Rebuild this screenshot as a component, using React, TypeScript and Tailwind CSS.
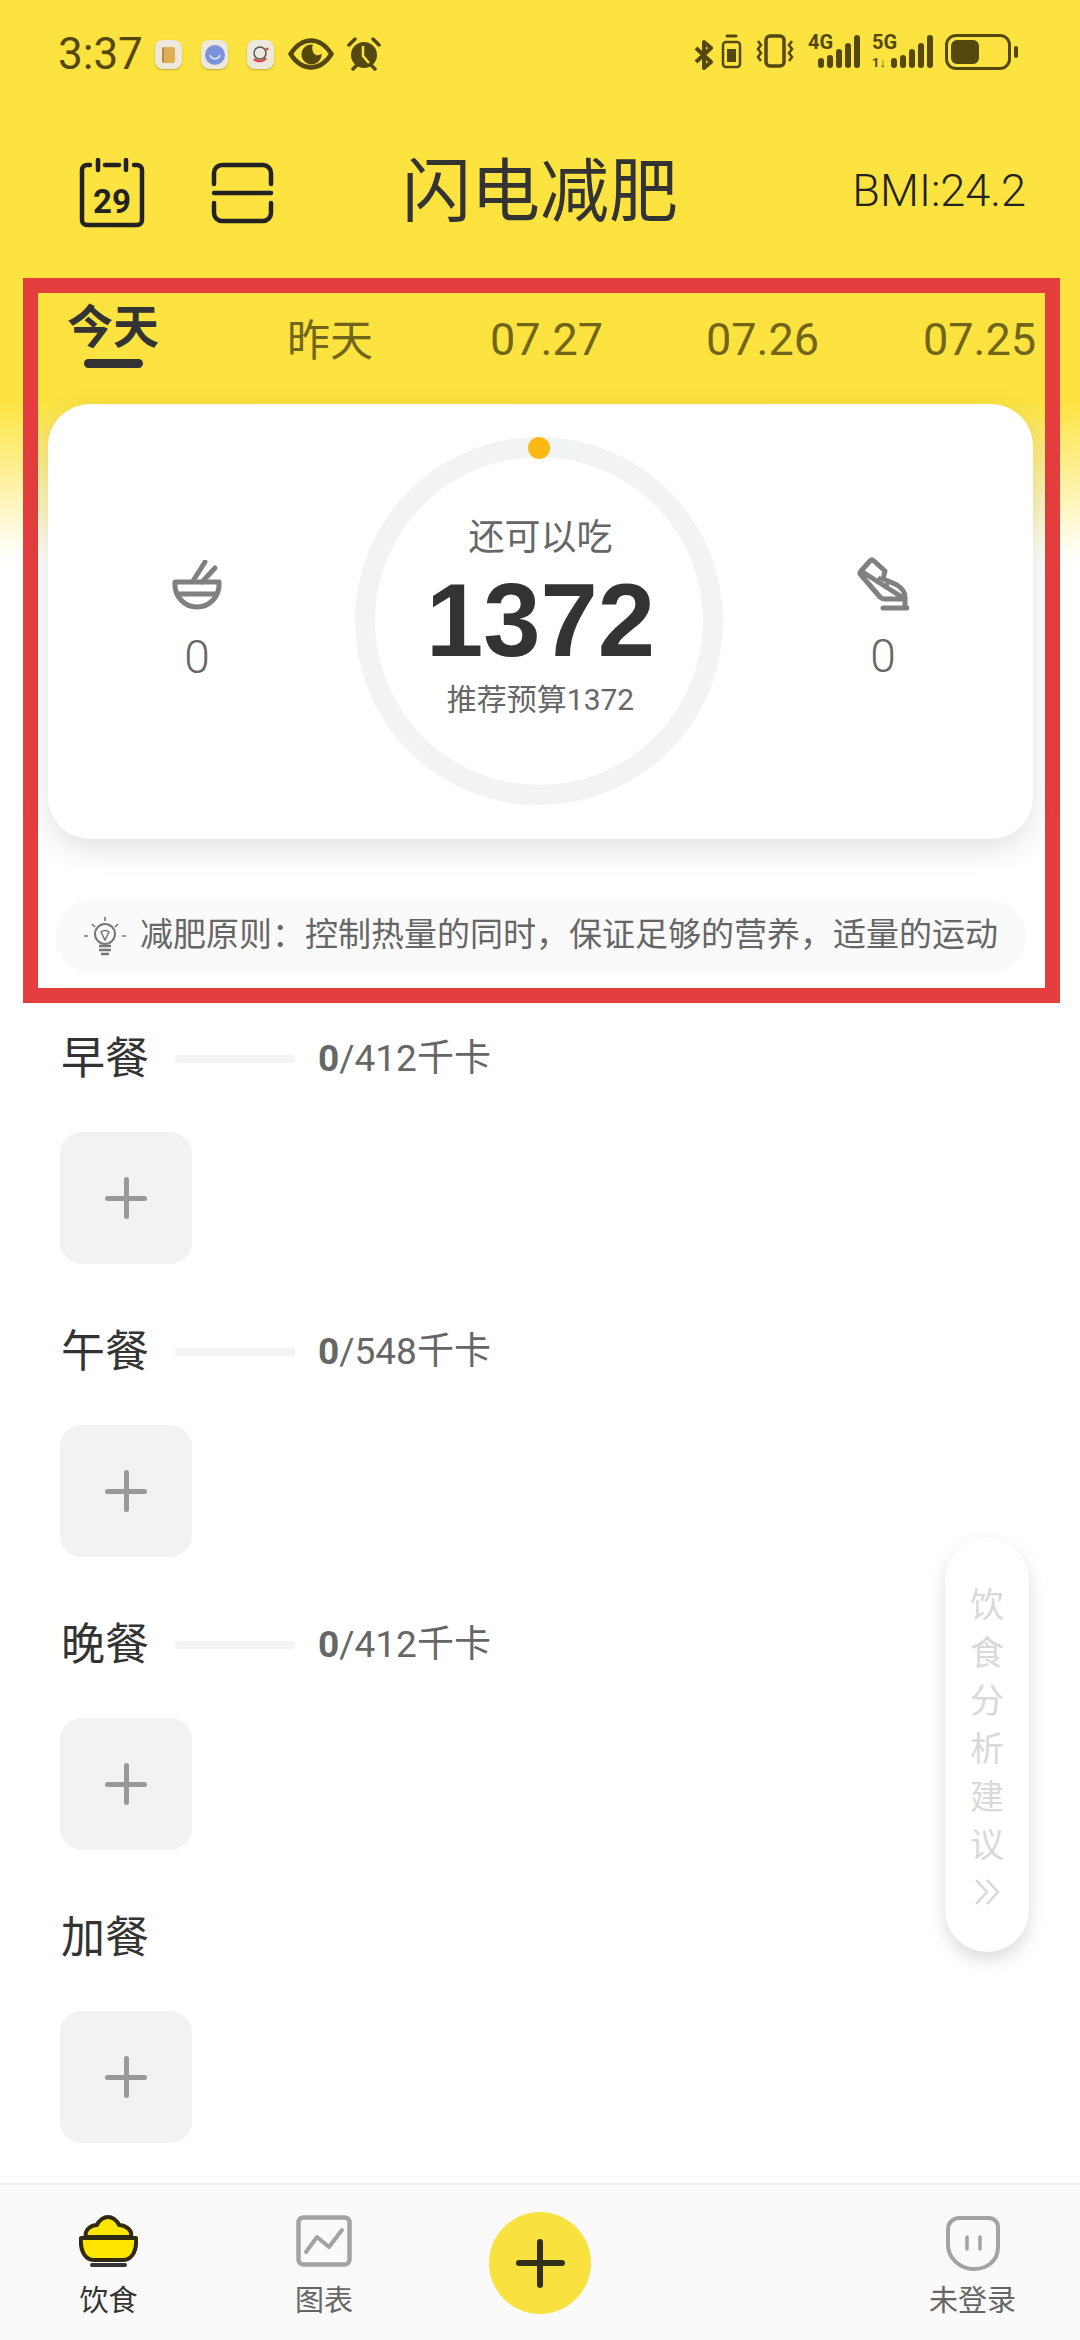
import React from 'react';

const CJK = '[font-family:Roboto,"Noto_Sans_CJK_SC",sans-serif]';
const DARK = '#54480f';

function AppDot({ children }: { children: React.ReactNode }) {
  return (
    <div className="w-[27px] h-[29px] rounded-[8px] bg-[#ece9dc] shadow-[0_1px_2px_rgba(0,0,0,0.25)] flex items-center justify-center">
      {children}
    </div>
  );
}

function SignalBars({ heights }: { heights: number[] }) {
  return (
    <div className="absolute right-0 bottom-0 flex items-end gap-[3px]">
      {heights.map((h, i) => (
        <div key={i} className="w-[6px] rounded-full bg-[#54480f]" style={{ height: h }} />
      ))}
    </div>
  );
}

function StatusBar() {
  return (
    <div className="h-[108px] shrink-0 pt-[34px] pl-[58px] pr-[62px] flex items-start text-[#54480f]">
      <span className="text-[44px] leading-[40px] w-[97px] [font-family:Roboto,sans-serif]">3:37</span>
      <div className="flex gap-[19px] pt-[6px]">
        <AppDot><div className="w-[13px] h-[16px] rounded-[2px] bg-[#dcae55] border-l-2 border-[#b98c3a]" /></AppDot>
        <AppDot>
          <svg width="20" height="20" viewBox="0 0 20 20">
            <circle cx="10" cy="10" r="10" fill="#7b93dc" />
            <path d="M5 10c2 5 8 5 10 0" stroke="#e8edf9" strokeWidth="1.600" fill="none" />
          </svg>
        </AppDot>
        <AppDot>
          <svg width="20" height="20" viewBox="0 0 20 20" fill="none">
            <circle cx="9" cy="8" r="6" stroke="#555" strokeWidth="1.500" />
            <path d="M3 14c3 3 9 3 12-1" stroke="#d84a4a" strokeWidth="2.500" />
            <circle cx="16" cy="4" r="1.500" fill="#d84a4a" />
          </svg>
        </AppDot>
      </div>
      <svg className="ml-[14px] mt-[4px]" width="46" height="32" viewBox="0 0 46 32" fill="none">
        <path d="M2.500 16C9 6 15 2.500 23 2.500S37 6 43.500 16C37 26 31 29.500 23 29.500S9 26 2.500 16Z" stroke={DARK} strokeWidth="4.500" strokeLinejoin="round" />
        <path d="M25 6.500a10 10 0 1 0 8.500 9c-2 2-5 2.500-7 .5-2-2-3-6-1.500-9.500Z" fill={DARK} />
      </svg>
      <svg className="ml-[13px] mt-[3px]" width="34" height="34" viewBox="0 0 34 34" fill="none">
        <circle cx="17" cy="18" r="13" fill={DARK} />
        <path d="M16 9v10l6 7" stroke="#fce33f" strokeWidth="2.500" />
        <path d="M2 8l6-6M32 8l-6-6M6 32l4-4M28 32l-4-4" stroke={DARK} strokeWidth="3.500" strokeLinecap="round" />
      </svg>
      <div className="ml-auto flex items-start">
        <svg width="20" height="30" viewBox="0 0 20 30" fill="none" className="mt-[6px]">
          <path d="M2 8l15 14-7 6V2l7 6L2 22" stroke={DARK} strokeWidth="4" strokeLinejoin="round" />
        </svg>
        <svg width="21" height="35" viewBox="0 0 21 35" fill="none" className="ml-[7px]">
          <path d="M6 2h9" stroke={DARK} strokeWidth="3" strokeLinecap="round" />
          <rect x="2" y="8" width="17" height="25" rx="3" stroke={DARK} strokeWidth="2.500" />
          <rect x="6" y="15" width="9" height="13" fill={DARK} />
        </svg>
        <svg width="42" height="34" viewBox="0 0 42 34" fill="none" className="ml-[12px]">
          <rect x="12" y="2" width="18" height="30" rx="4" stroke={DARK} strokeWidth="3.500" />
          <path d="M4 7l3 4-3 4 3 4-3 4 3 4M38 7l-3 4 3 4-3 4 3 4-3 4" stroke={DARK} strokeWidth="2.500" />
        </svg>
        <div className="relative w-[52px] h-[34px] ml-[12px]">
          <span className="absolute left-0 top-[-3px] text-[20px] leading-[22px] font-bold [font-family:Roboto,sans-serif]">4G</span>
          <SignalBars heights={[10, 13, 19, 25, 33]} />
        </div>
        <div className="relative w-[61px] h-[34px] ml-[12px]">
          <span className="absolute left-0 top-[-3px] text-[20px] leading-[22px] font-bold [font-family:Roboto,sans-serif]">5G</span>
          <span className="absolute left-0 bottom-[-2px] text-[13px] leading-[14px] font-bold [font-family:Roboto,sans-serif]">1↓</span>
          <SignalBars heights={[10, 13, 19, 25, 33]} />
        </div>
        <div className="ml-[12px] flex items-center">
          <div className="w-[66px] h-[36px] rounded-[11px] border-[3px] border-[#54480f] p-[3px]">
            <div className="w-[28px] h-full rounded-[6px] bg-[#54480f]" />
          </div>
          <div className="ml-[3px] w-[4px] h-[12px] rounded-full bg-[#54480f]" />
        </div>
      </div>
    </div>
  );
}

function Header() {
  return (
    <div className="h-[170px] shrink-0 pl-[79px] pr-[54px] pt-[50px] flex items-start">
      <svg width="66" height="70" viewBox="0 0 66 70" fill="none">
        <path d="M11 7H8a5 5 0 0 0-5 5v50a5 5 0 0 0 5 5h50a5 5 0 0 0 5-5V12a5 5 0 0 0-5-5h-3M26 7h14" stroke="#222" strokeWidth="4.500" strokeLinecap="round" />
        <path d="M19 2v10M47 2v10" stroke="#222" strokeWidth="4.500" strokeLinecap="round" />
        <text x="33" y="55" textAnchor="middle" fontSize="33" fontWeight="700" fontFamily="Roboto, sans-serif" fill="#222">29</text>
      </svg>
      <svg className="ml-[66px] mt-[4px]" width="63" height="62" viewBox="0 0 63 62" fill="none">
        <path d="M3 22V11a8 8 0 0 1 8-8h41a8 8 0 0 1 8 8v11M3 41v10a8 8 0 0 0 8 8h41a8 8 0 0 0 8-8V41" stroke="#222" strokeWidth="4.500" strokeLinecap="round" />
        <path d="M3 31h57" stroke="#222" strokeWidth="4.500" strokeLinecap="round" />
      </svg>
      <span className={`ml-[128px] mt-[-3px] text-[69px] leading-[76px] font-normal text-[#333] ${CJK}`}>闪电减肥</span>
      <span className="ml-auto mt-[9px] text-[45px] leading-[48px] font-light text-[#222] [font-family:Roboto,sans-serif]">BMI:24.2</span>
    </div>
  );
}

function DateTabs() {
  return (
    <div className="h-[111px] relative text-[#706518]">
      <div className="absolute left-[29px] top-[6px] flex flex-col items-center">
        <span className={`text-[46px] leading-[56px] font-bold text-[#333] ${CJK}`}>今天</span>
        <div className="w-[59px] h-[9px] rounded-full bg-[#333] mt-[4px]" />
      </div>
      <span className={`absolute left-[249px] top-[25px] text-[43px] leading-[46px] ${CJK}`}>昨天</span>
      <span className="absolute left-[452px] top-[24px] text-[45px] leading-[46px] [font-family:Roboto,sans-serif]">07.27</span>
      <span className="absolute left-[668px] top-[24px] text-[45px] leading-[46px] [font-family:Roboto,sans-serif]">07.26</span>
      <span className="absolute left-[885px] top-[24px] text-[45px] leading-[46px] [font-family:Roboto,sans-serif]">07.25</span>
    </div>
  );
}

function SummaryCard() {
  return (
    <div className="ml-[10px] w-[985px] h-[435px] rounded-[42px] bg-white shadow-[0_10px_30px_rgba(0,0,0,0.12)] flex items-start">
      <div className="w-[307px] pr-[9px] pt-[156px] flex flex-col items-center">
        <svg width="50" height="50" viewBox="0 0 50 50" fill="none">
          <path d="M21 21l12-19M30 22l13-14" stroke="#808080" strokeWidth="5" strokeLinecap="round" />
          <path d="M3 22h44c1 14-9 25-22 25S2 36 3 22Z" stroke="#808080" strokeWidth="5" strokeLinejoin="round" />
          <path d="M6 34h38" stroke="#808080" strokeWidth="5" />
        </svg>
        <span className="text-[46px] leading-[52px] mt-[21px] text-[#666] font-light [font-family:Roboto,sans-serif]">0</span>
      </div>
      <div className="w-[368px] h-[368px] mt-[33px] pl-[3px] rounded-full border-[20px] border-[#f2f3f3] relative flex flex-col items-center shrink-0">
        <div className="absolute top-[-20px] left-[153px] w-[22px] h-[22px] rounded-full bg-[#fdb913]" />
        <span className={`mt-[57px] text-[36px] leading-[48px] text-[#666] ${CJK}`}>还可以吃</span>
        <span className="mt-[9px] text-[103px] leading-[100px] font-bold text-[#333] [font-family:'Liberation_Sans',sans-serif]">1372</span>
        <span className={`mt-[10px] text-[30px] leading-[38px] text-[#666] ${CJK}`}>推荐预算1372</span>
      </div>
      <div className="flex-1 pl-[10px] pt-[153px] flex flex-col items-center">
        <svg width="52" height="54" viewBox="0 0 52 54" fill="none">
          <path d="M4 14L13 4Q15 2 17 4L28 14L26 22Q34 25 40 28Q48 33 48 40V50M48 42H28Q25 42 23 40L4 18Q2 16 4 14Z" stroke="#808080" strokeWidth="5" strokeLinejoin="round" />
          <path d="M24 20l-5 6M32 25l-5 6" stroke="#808080" strokeWidth="4" />
          <path d="M26 51H50" stroke="#808080" strokeWidth="5" strokeLinecap="round" />
        </svg>
        <span className="text-[46px] leading-[52px] mt-[19px] text-[#666] font-light [font-family:Roboto,sans-serif]">0</span>
      </div>
    </div>
  );
}

function TipBar() {
  return (
    <div className="mt-[61px] ml-[17px] w-[971px] h-[73px] rounded-full bg-[#fafafa] flex items-center pl-[29px]">
      <svg width="42" height="42" viewBox="0 0 42 42" fill="none">
        <path d="M21 1v4M4 20H0M42 20h-4M8 8l3 3M34 8l-3 3" stroke="#777" strokeWidth="1.600" />
        <circle cx="21" cy="18" r="10" stroke="#777" strokeWidth="2" />
        <path d="M17 16l4 8 4-8c-2-2-6-2-8 0Z" stroke="#777" strokeWidth="1.500" />
        <path d="M15 30h12M15 34h12M17 38h8" stroke="#777" strokeWidth="2.400" />
      </svg>
      <span className={`ml-[14px] mb-[4px] text-[33px] leading-[40px] text-[#666] whitespace-nowrap ${CJK}`}>{'减肥原则\uFF1A控制热量的同时\uFF0C保证足够的营养\uFF0C适量的运动'}</span>
    </div>
  );
}

function MealRow({ name, budget }: { name: string; budget?: string }) {
  return (
    <div className="h-[293px] shrink-0 flex flex-col">
      <div className="h-[70px] flex items-center pl-[61px]">
        <span className={`text-[44px] leading-[64px] text-[#333] ${CJK}`}>{name}</span>
        {budget && (
          <>
            <div className="ml-[26px] w-[120px] h-[8px] rounded-full bg-[#f3f3f3]" />
            <span className={`ml-[23px] text-[37px] leading-[64px] text-[#666] ${CJK}`}>
              <b className="text-[#666]">0</b>/{budget}千卡
            </span>
          </>
        )}
      </div>
      <div className="mt-[38px] ml-[60px] w-[132px] h-[132px] rounded-[22px] bg-[#f2f2f2] flex items-center justify-center">
        <div className="relative w-[42px] h-[42px]">
          <div className="absolute left-[19px] top-0 w-[5px] h-[42px] rounded-full bg-[#999]" />
          <div className="absolute top-[19px] left-0 h-[5px] w-[42px] rounded-full bg-[#999]" />
        </div>
      </div>
    </div>
  );
}

function AdviceButton() {
  return (
    <div className="absolute left-[945px] top-[1538px] w-[84px] h-[414px] rounded-full bg-white shadow-[0_8px_18px_rgba(0,0,0,0.14)] flex flex-col items-center pt-[43px] text-[#d9d9d9]">
      {['饮', '食', '分', '析', '建', '议'].map((c) => (
        <span key={c} className={`text-[34px] leading-[48px] ${CJK}`}>{c}</span>
      ))}
      <svg className="mt-[9px]" width="26" height="28" viewBox="0 0 26 28" fill="none">
        <path d="M2 2l11 12L2 26M13 2l11 12-11 12" stroke="#d9d9d9" strokeWidth="2.500" />
      </svg>
    </div>
  );
}

function BottomNav() {
  return (
    <div className="h-[157px] shrink-0 bg-[#fafafa] border-t-2 border-[#f1f1f1] relative">
      <div className="absolute left-[79px] top-[30px] w-[59px] flex flex-col items-center">
        <svg width="59" height="52" viewBox="0 0 59 52" fill="none">
          <path d="M7 22C5 15 12 10 18 10 20 5 25 2 29 2s9 3 11 8c6 0 14 5 12 12Z" fill="#ffe600" stroke="#2f2a10" strokeWidth="4" strokeLinejoin="round" />
          <path d="M2 23h55c1 11-3 22-13 22H15C5 45 1 34 2 23Z" fill="#ffe600" stroke="#2f2a10" strokeWidth="4" strokeLinejoin="round" />
          <path d="M13 50h33" stroke="#333" strokeWidth="4" strokeLinecap="round" />
        </svg>
        <span className={`mt-[17px] text-[29px] leading-[34px] text-[#333] whitespace-nowrap ${CJK}`}>饮食</span>
      </div>
      <div className="absolute left-[295px] top-[30px] w-[58px] flex flex-col items-center">
        <svg width="56" height="52" viewBox="0 0 56 52" fill="none">
          <rect x="2.500" y="2.500" width="51" height="47" rx="5" stroke="#a3a3a3" strokeWidth="4.500" />
          <path d="M10 37l11-15 12 10 13-17" stroke="#a3a3a3" strokeWidth="4" strokeLinecap="round" strokeLinejoin="round" />
        </svg>
        <span className={`mt-[17px] text-[29px] leading-[34px] text-[#666] whitespace-nowrap ${CJK}`}>图表</span>
      </div>
      <div className="absolute left-[489px] top-[27px] w-[102px] h-[102px] rounded-full bg-[#f9e13f] flex items-center justify-center">
        <div className="relative w-[49px] h-[49px]">
          <div className="absolute left-[21px] top-0 w-[6px] h-[49px] rounded-full bg-[#33301a]" />
          <div className="absolute top-[21px] left-0 h-[6px] w-[49px] rounded-full bg-[#33301a]" />
        </div>
      </div>
      <div className="absolute left-[928px] top-[30px] w-[89px] flex flex-col items-center">
        <svg width="56" height="56" viewBox="0 0 56 56" fill="none">
          <path d="M14 3h30c5 0 9 4 9 9v20c0 13-10 22-24 22S3 43 3 30V14C3 8 8 3 14 3Z" stroke="#a3a3a3" strokeWidth="4" />
          <path d="M22 22v12M35 22v12" stroke="#a3a3a3" strokeWidth="3.500" strokeLinecap="round" />
        </svg>
        <span className={`mt-[13px] text-[29px] leading-[34px] text-[#666] whitespace-nowrap ${CJK}`}>未登录</span>
      </div>
    </div>
  );
}

export default function App() {
  return (
    <div className="w-[1080px] h-[2340px] overflow-hidden relative flex flex-col bg-[linear-gradient(to_bottom,#fce33f_0,#fce33f_400px,#fffef5_550px,#ffffff_570px)]">
      <StatusBar />
      <Header />

      {/* Red highlight round the day summary */}
      <div className="ml-[23px] w-[1037px] h-[725px] shrink-0 border-[15px] border-[#e53e3e]">
        <DateTabs />
        <SummaryCard />
        <TipBar />
      </div>

      <div className="mt-[21px] flex-1 min-h-0">
        <MealRow name="早餐" budget="412" />
        <MealRow name="午餐" budget="548" />
        <MealRow name="晚餐" budget="412" />
        <MealRow name="加餐" />
      </div>

      <AdviceButton />
      <BottomNav />
    </div>
  );
}
